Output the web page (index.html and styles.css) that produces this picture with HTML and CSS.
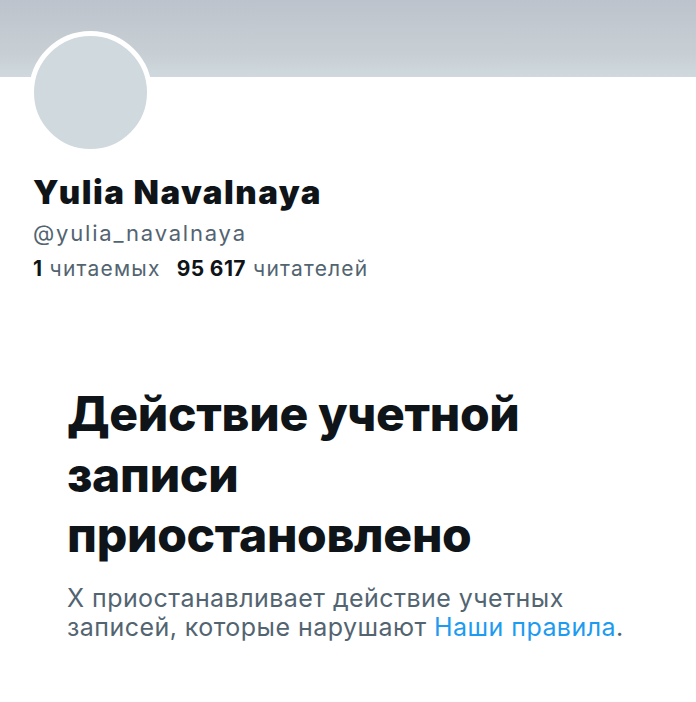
FILE: index.html
```html
<!DOCTYPE html>
<html lang="ru">
<head>
  <meta charset="UTF-8">
  <meta name="viewport" content="width=device-width, initial-scale=1.0">
  <title>Yulia Navalnaya</title>
  <link rel="stylesheet" href="styles.css">
</head>
<body>
  <div class="banner"></div>

  <div class="profile">
    <div class="avatar"></div>
    <h1 class="name">Yulia Navalnaya</h1>
    <div class="handle">@yulia_navalnaya</div>
    <div class="stats">
      <span><b>1</b> читаемых</span>
      <span><b>95 617</b> читателей</span>
    </div>
  </div>

  <div class="notice">
    <h2>Действие учетной записи приостановлено</h2>
    <p>X приостанавливает действие учетных записей, которые нарушают <a href="#">Наши правила</a>.</p>
  </div>
</body>
</html>
```

FILE: styles.css
```css
body {
  margin: 0;
  padding: 0;
  background: #fff;
  font-family: 'Inter', 'Noto Sans', sans-serif;
  color: #0f1419;
}
.banner {
  height: 77px;
  background: linear-gradient(to bottom, #bcc3cc, #c8cfd4 70%, #cfd9de);
}
.profile {
  padding: 0 0 0 29px;
}
.avatar {
  width: 113px;
  height: 113px;
  margin-top: -46px;
  border: 5px solid #fff;
  border-radius: 50%;
  background: #cfd9de;
}
.name {
  margin: 19px 0 0 4px;
  font-size: 33px;
  font-weight: 900;
  line-height: 38px;
  letter-spacing: 1.5px;
}
.handle {
  margin: 7px 0 0 4px;
  font-size: 22px;
  line-height: 30px;
  letter-spacing: 1.8px;
  color: #536471;
}
.stats {
  display: flex;
  gap: 16px;
  margin: 7px 0 0 4px;
  font-size: 21px;
  line-height: 28px;
  letter-spacing: 1.2px;
  color: #536471;
}
.stats b {
  color: #0f1419;
  font-weight: 700;
  letter-spacing: 0.4px;
}
.notice {
  padding: 101px 60px 0 67px;
}
.notice h2 {
  margin: 0;
  width: 480px;
  font-size: 48px;
  font-weight: 800;
  line-height: 60.5px;
  letter-spacing: -0.3px;
}
.notice p {
  margin: 18px 0 0;
  width: 560px;
  font-size: 25px;
  line-height: 29px;
  letter-spacing: 0.45px;
  color: #536471;
}
.notice a {
  color: #1d9bf0;
  text-decoration: none;
}
```
